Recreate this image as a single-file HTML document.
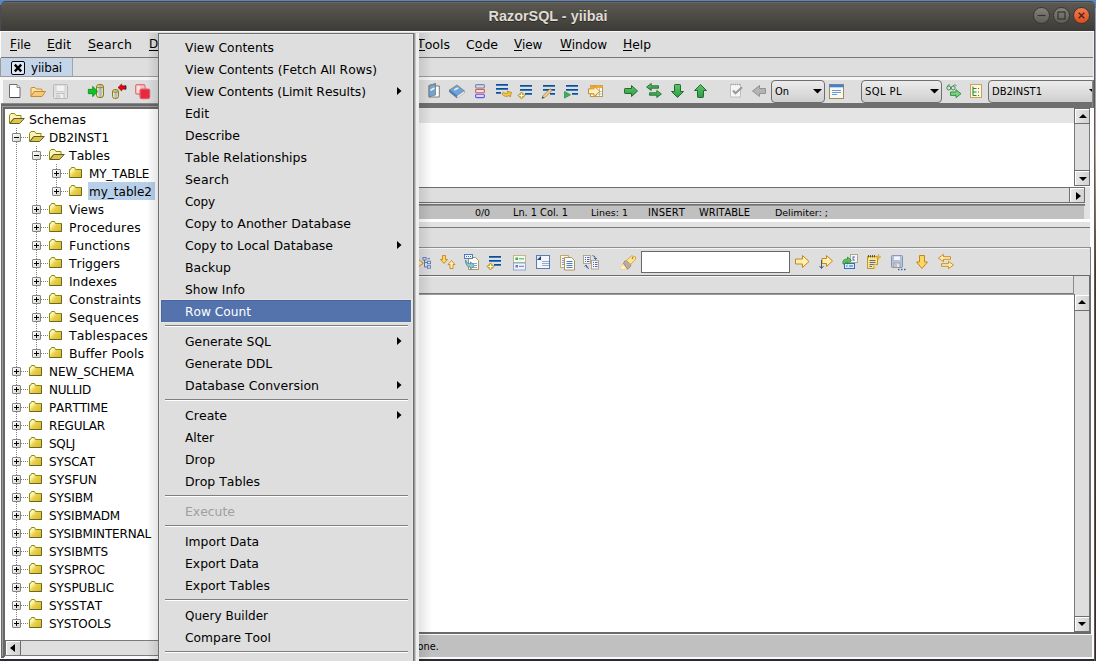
<!DOCTYPE html><html><head><meta charset="utf-8"><title>RazorSQL - yiibai</title><style>
*{box-sizing:border-box;margin:0;padding:0}
html,body{width:1096px;height:661px;overflow:hidden;background:#dedede}
body{position:relative;font-family:"DejaVu Sans","Liberation Sans",sans-serif;font-size:12px;color:#000}
.a{position:absolute}
.t{position:absolute;white-space:nowrap;font-kerning:none}
u{text-decoration:none;box-shadow:0 1px 0 #000;display:inline-block;height:12px;line-height:12px;vertical-align:top}
svg{position:absolute;overflow:visible}
.mi{position:absolute;left:185px;white-space:nowrap;line-height:14px;height:14px;letter-spacing:0.2px}
.sep{position:absolute;left:165px;width:243px;height:2px;border-top:1px solid #7f7f7f;border-bottom:1px solid #fff}
.tr{position:absolute;white-space:nowrap;line-height:14px;height:14px;letter-spacing:-0.15px}
.s10{font-size:10px;position:absolute;white-space:nowrap;line-height:12px;height:12px}
.cb{position:absolute;height:23px;top:80px;border:1px solid #6e6e6e;border-radius:4px;background:linear-gradient(#ececec,#cfcfcf)}
.sbtn{position:absolute;background:linear-gradient(to right,#e8e8e8,#d2d2d2);border:1px solid #6e6e6e;box-shadow:inset 1px 1px 0 #fff}
</style></head><body>
<div class="a" style="left:0px;top:0px;width:1096px;height:8px;background:#5a86c6;"></div>
<div class="a" style="left:0px;top:5px;width:1px;height:26px;background:#4a4a50;"></div>
<div class="a" style="left:1px;top:1px;width:1094px;height:30px;background:linear-gradient(#5c5a52,#3c3b37);border-radius:5px 5px 0 0;border-top:1px solid #45443d;box-shadow:inset 0 1px 0 #6a685c"></div>
<div class="t" style="left:0;width:1096px;top:8px;text-align:center;font:bold 14.4px 'Liberation Sans',sans-serif;color:#dfdbd2;line-height:16px;height:16px;text-shadow:0 1px 0 #2b2a27">RazorSQL - yiibai</div>
<div class="a" style="left:1032.5px;top:7px;width:17px;height:17px;background:linear-gradient(#84837b,#5d5c56);border-radius:9px;border:1px solid #383733"></div>
<div class="a" style="left:1052.5px;top:7px;width:17px;height:17px;background:linear-gradient(#84837b,#5d5c56);border-radius:9px;border:1px solid #383733"></div>
<div class="a" style="left:1072.5px;top:7px;width:17px;height:17px;background:linear-gradient(#f27c52,#d84e1e);border-radius:9px;border:1px solid #383733"></div>
<svg style="left:1032.5px;top:7px" width="60" height="17" viewBox="0 0 60 17"><path d="M4.500 8.500h8" stroke="#35342f" stroke-width="1.200" fill="none"/><rect x="25" y="5" width="7" height="7" fill="none" stroke="#35342f" stroke-width="1.200"/><path d="M45.700 5.700l5.600 5.600M51.300 5.700l-5.600 5.600" stroke="#4a2414" stroke-width="1.300" fill="none"/></svg>
<div class="a" style="left:0px;top:31px;width:1096px;height:1px;background:#f8f8f8;"></div>
<div class="a" style="left:0px;top:32px;width:1096px;height:25px;background:#dedede;"></div>
<div class="a" style="left:0px;top:57px;width:1096px;height:1px;background:#787878;"></div>
<div class="t" style="left:10px;top:38px;font-size:12px;letter-spacing:0.012px;line-height:14px;height:14px;color:#000;"><u>F</u>ile</div>
<div class="t" style="left:47px;top:38px;font-size:12.4px;letter-spacing:-0.003px;line-height:14px;height:14px;color:#000;"><u>E</u>dit</div>
<div class="t" style="left:88px;top:38px;font-size:12.5px;letter-spacing:0.130px;line-height:14px;height:14px;color:#000;"><u>S</u>earch</div>
<div class="t" style="left:149px;top:38px;font-size:12px;letter-spacing:-0.236px;line-height:14px;height:14px;color:#000;"><u>D</u>B</div>
<div class="t" style="left:417px;top:38px;font-size:12.5px;letter-spacing:0.017px;line-height:14px;height:14px;color:#000;"><u>T</u>ools</div>
<div class="t" style="left:466px;top:38px;font-size:12.5px;letter-spacing:-0.000px;line-height:14px;height:14px;color:#000;">C<u>o</u>de</div>
<div class="t" style="left:514px;top:38px;font-size:12px;letter-spacing:-0.185px;line-height:14px;height:14px;color:#000;"><u>V</u>iew</div>
<div class="t" style="left:560px;top:38px;font-size:12px;letter-spacing:-0.096px;line-height:14px;height:14px;color:#000;"><u>W</u>indow</div>
<div class="t" style="left:623px;top:38px;font-size:12.3px;letter-spacing:-0.010px;line-height:14px;height:14px;color:#000;"><u>H</u>elp</div>
<div class="a" style="left:0px;top:58px;width:1096px;height:18px;background:#dedede;"></div>
<div class="a" style="left:1px;top:58px;width:72px;height:18px;background:#c4d5ea;border-right:1px solid #9aa6b5"></div>
<div class="a" style="left:0px;top:76px;width:1096px;height:1px;background:#9c9c9c;"></div>
<div class="a" style="left:0px;top:31px;width:1px;height:27px;background:#fafafa;"></div>
<div class="a" style="left:0px;top:58px;width:1px;height:19px;background:#9c9c9c;"></div>
<div class="a" style="left:0px;top:77px;width:1096px;height:3px;background:#f6f6f6;"></div>
<div class="a" style="left:11px;top:61px;width:14px;height:14px;border:1px solid #000;border-radius:2px;background:#dfe8f4"></div>
<svg style="left:11px;top:61px" width="14" height="14" viewBox="0 0 14 14"><path d="M3.800 3.600l6.400 6.800M10.200 3.600l-6.400 6.800" stroke="#000" stroke-width="2.300" fill="none"/></svg>
<div class="t" style="left:31px;top:61px;font-size:12px;letter-spacing:-0.179px;line-height:14px;height:14px;color:#000;">yiibai</div>
<div class="a" style="left:0px;top:80px;width:1096px;height:23px;background:#dedede;"></div>
<div class="a" style="left:0px;top:80px;width:3px;height:23px;background:#fafafa;"></div>
<svg style="left:0px;top:0px" width="0" height="0" viewBox="0 0 0 0"><defs><linearGradient id="cy" x1="0" x2="1"><stop offset="0" stop-color="#f8f8f8"/><stop offset="0.550" stop-color="#b0b0b0"/><stop offset="1" stop-color="#e4e4e4"/></linearGradient></defs></svg>
<svg style="left:0px;top:0px" width="0" height="0" viewBox="0 0 0 0"><defs><linearGradient id="gg" x1="0" y1="0" x2="0" y2="1"><stop offset="0" stop-color="#62c46c"/><stop offset="1" stop-color="#2f9a42"/></linearGradient></defs></svg>
<svg style="left:9px;top:84px" width="16" height="16" viewBox="0 0 16 16"><path d="M0.5 0.5h7.5l3 3v10h-10.5z" fill="#fff" stroke="#6f6f6f"/><path d="M8 0.5v3h3" fill="#e8e8d8" stroke="#6f6f6f" stroke-width="0.8"/><path d="M1 13.5h10" stroke="#444"/></svg>
<svg style="left:30px;top:86px" width="16" height="16" viewBox="0 0 16 16"><path d="M1 10.5v-8q0-1 1-1h3l1.5 1.5h4.5q1 0 1 1v2" fill="#fbe2ac" stroke="#c98a2b"/><path d="M1 10.5l3-5h11.5l-3.5 5z" fill="#f6c978" stroke="#c98a2b" stroke-linejoin="round"/></svg>
<svg style="left:53px;top:84px" width="16" height="16" viewBox="0 0 16 16"><rect x="0.500" y="0.500" width="14" height="14" rx="1" fill="#e2e2e2" stroke="#b6b6b6"/><rect x="3" y="1" width="9" height="6.500" fill="#f2f2f2" stroke="#c4c4c4" stroke-width="0.700"/><rect x="4" y="9.500" width="7" height="5" fill="#f0f0f0" stroke="#b6b6b6" stroke-width="0.800"/><rect x="5.200" y="10.800" width="2" height="3" fill="#cacaca"/></svg>
<svg style="left:88px;top:84px" width="16" height="16" viewBox="0 0 16 16"><rect x="8.500" y="0.500" width="7" height="13" rx="2.500" fill="url(#cy)" stroke="#8c8400" stroke-width="1"/><path d="M8.500 3q3.500 1.800 7 0" fill="none" stroke="#8c8400" stroke-width="0.900"/><path d="M0.300 5.300h4.400v-3l5 5.200-5 5.200v-3h-4.400z" fill="#08c820" stroke="#0a6a14" stroke-width="0.600"/></svg>
<svg style="left:111px;top:84px" width="16" height="16" viewBox="0 0 16 16"><rect x="1.500" y="5.500" width="6" height="9" rx="2.200" fill="url(#cy)" stroke="#8c8400" stroke-width="1"/><path d="M1.500 7.600q3 1.500 6 0" fill="none" stroke="#8c8400" stroke-width="0.900"/><path d="M15 1.800h-4.300v-1.800l-3.700 3.500 3.700 3.500v-1.800h4.300z" fill="#f40000" stroke="#500" stroke-width="0.500"/><path d="M14.700 1.600v3.800" stroke="#102a90" stroke-width="0.900"/></svg>
<svg style="left:135px;top:84px" width="16" height="16" viewBox="0 0 16 16"><rect x="0.600" y="0.600" width="9.500" height="9.500" rx="1.500" fill="#f7bcbc" stroke="#df7474" stroke-width="1.100"/><rect x="1.800" y="1.800" width="3.500" height="7" fill="#fde8e8" opacity="0.800"/><rect x="5.100" y="5.100" width="9.500" height="9.500" rx="1.500" fill="#e52a40" stroke="#e25c6a" stroke-width="1.300"/></svg>
<svg style="left:428px;top:83px" width="16" height="16" viewBox="0 0 16 16"><path d="M1 2.5l6.5-1.8v11.3l-6.5 2z" fill="#68a4e6" stroke="#5a5a6a" stroke-width="0.8"/><path d="M7.5 3h3.8v11h-10z" fill="#fff" stroke="#5a5a6a" stroke-width="0.8"/><path d="M1 2.5l6.5-1.8v11.3l-6.5 2z" fill="#68a4e6" stroke="#8a7a50" stroke-width="0.8"/><path d="M3 7l2.8-1.6" stroke="#f0ead8" stroke-width="1.8" stroke-linecap="round"/></svg>
<svg style="left:449px;top:84px" width="16" height="16" viewBox="0 0 16 16"><path d="M0.5 6l7.5-5 7.5 6-7.5 5z" fill="#68a4e6" stroke="#8a7a50" stroke-width="0.8"/><path d="M0.5 6l7.5 6v2l-7.5-6z" fill="#3f7fd0" stroke="#5a6a8a" stroke-width="0.6"/><path d="M8 12l7.5-5v2l-7.5 5z" fill="#fff" stroke="#9a9a9a" stroke-width="0.6"/><path d="M6 5.5l2.6-1.2" stroke="#f0ead8" stroke-width="1.8" stroke-linecap="round"/></svg>
<svg style="left:475px;top:84px" width="16" height="16" viewBox="0 0 16 16"><rect x="0.600" y="0.600" width="8.800" height="3.400" rx="1" fill="#e6dcc0" stroke="#6a88cc" stroke-width="1.100"/><rect x="0.600" y="5.400" width="8.800" height="3.400" rx="1" fill="#fbe0d8" stroke="#d05c5c" stroke-width="1.100"/><rect x="0.600" y="10.200" width="8.800" height="3.400" rx="1" fill="#d8d8fb" stroke="#5c5ce0" stroke-width="1.100"/></svg>
<svg style="left:496px;top:84px" width="16" height="16" viewBox="0 0 16 16"><rect x="0" y="0" width="12" height="1" fill="#0c4f98"/><rect x="0" y="1" width="12" height="1" fill="#3a78bc"/><rect x="0" y="4" width="12" height="1" fill="#0c4f98"/><rect x="0" y="5" width="12" height="1" fill="#3a78bc"/><rect x="0" y="8" width="5" height="1" fill="#0c4f98"/><rect x="0" y="9" width="5" height="1" fill="#3a78bc"/><path d="M7.200 8.300q2.600 2.400 5 0.600l-1.100-1.700 4.400 1.300-1.300 4.500-1-1.600q-3.800 2.600-7.200-1.300z" fill="#f6c84a" stroke="#b8860b" stroke-width="0.800" stroke-linejoin="round"/></svg>
<svg style="left:518px;top:85px" width="16" height="16" viewBox="0 0 16 16"><g transform="translate(2,0)"><rect x="0" y="0" width="12" height="1" fill="#0c4f98"/><rect x="0" y="1" width="12" height="1" fill="#3a78bc"/><rect x="0" y="4" width="12" height="1" fill="#0c4f98"/><rect x="0" y="5" width="12" height="1" fill="#3a78bc"/><rect x="5" y="8" width="7" height="1" fill="#0c4f98"/><rect x="5" y="9" width="7" height="1" fill="#3a78bc"/></g><g transform="translate(0,7)"><path d="M0 3.500l3.500-3.500 3.500 3.500-3.500 3.500z" fill="#c8a024" stroke="#b08a14" stroke-width="0.600"/><path d="M3.500 1.200v4.600M1.200 3.500h4.600" stroke="#fffbe4" stroke-width="1.200"/></g></svg>
<svg style="left:541px;top:85px" width="16" height="16" viewBox="0 0 16 16"><g transform="translate(2,0)"><rect x="0" y="0" width="12" height="1" fill="#0c4f98"/><rect x="0" y="1" width="12" height="1" fill="#3a78bc"/><rect x="0" y="4" width="12" height="1" fill="#0c4f98"/><rect x="0" y="5" width="12" height="1" fill="#3a78bc"/><rect x="7" y="8" width="5" height="1" fill="#0c4f98"/><rect x="7" y="9" width="5" height="1" fill="#3a78bc"/></g><path d="M1 13.5l1-2.8 7-7 2 1.8-7 7z" fill="#f0cc90" stroke="#a07830" stroke-width="0.7"/><path d="M1 13.5l0.7-2 1.4 1.3z" fill="#203060"/></svg>
<svg style="left:564px;top:85px" width="16" height="16" viewBox="0 0 16 16"><g transform="translate(2,0)"><rect x="0" y="0" width="12" height="1" fill="#0c4f98"/><rect x="0" y="1" width="12" height="1" fill="#3a78bc"/><rect x="0" y="4" width="12" height="1" fill="#0c4f98"/><rect x="0" y="5" width="12" height="1" fill="#3a78bc"/><rect x="6" y="8" width="6" height="1" fill="#0c4f98"/><rect x="6" y="9" width="6" height="1" fill="#3a78bc"/></g><path d="M0.5 6.5l6 3.3-6 3.3z" fill="#3fae5a" stroke="#2a8a40" stroke-width="0.7"/></svg>
<svg style="left:588px;top:85px" width="16" height="16" viewBox="0 0 16 16"><rect x="2.5" y="0.5" width="12" height="11" fill="#fff" stroke="#b89a50"/><rect x="2.5" y="0.5" width="12" height="2.5" fill="#f6a83c"/><path d="M2.5 6.5h12M2.5 9h12M8.5 3v8.5M11.5 3v8.5" stroke="#b8b08a" stroke-width="0.8"/><path d="M0.500 3.800h5.500v-3l5.800 5.500-5.800 5.500v-3h-5.500z" fill="#fdf0c0" stroke="#d08a1a" stroke-width="1"/></svg>
<svg style="left:624px;top:85px" width="16" height="16" viewBox="0 0 16 16"><path d="M1.200 3.500h6.300v-3l6 5.500-6 5.500v-3h-6.300q-0.700 0-0.700-0.700v-3.600q0-0.700 0.700-0.700z" fill="url(#gg)" stroke="#1d6e2e" stroke-width="1"/></svg>
<svg style="left:646px;top:83px" width="16" height="16" viewBox="0 0 16 16"><path d="M0.600 4l4.600-3.500v2.300h7.300v2.400h-7.300v2.300z" fill="url(#gg)" stroke="#1d6e2e" stroke-width="0.900"/><path d="M15.400 11l-4.600-3.500v2.300h-7.300v2.400h7.300v2.300z" fill="url(#gg)" stroke="#1d6e2e" stroke-width="0.900"/></svg>
<svg style="left:671px;top:84px" width="16" height="16" viewBox="0 0 16 16"><path d="M4.200 0.500h4.600q0.700 0 0.700 0.700v6.300h3l-6 6-6-6h3v-6.300q0-0.700 0.700-0.700z" fill="url(#gg)" stroke="#1d6e2e" stroke-width="1"/></svg>
<svg style="left:694px;top:84px" width="16" height="16" viewBox="0 0 16 16"><path d="M4.200 13.500h4.600q0.700 0 0.700-0.700v-6.300h3l-6-6-6 6h3v6.300q0 0.700 0.700 0.700z" fill="url(#gg)" stroke="#1d6e2e" stroke-width="1"/></svg>
<svg style="left:730px;top:83px" width="16" height="16" viewBox="0 0 16 16"><rect x="0.5" y="1.5" width="10" height="12.500" fill="#f6f6f6" stroke="#c0c0c0"/><path d="M1 1.500h9.500" stroke="#a8a8a8" stroke-dasharray="1 1" stroke-width="1.4"/><path d="M3 7.500l2.500 2.800 6.500-6" stroke="#9a9a9a" stroke-width="2.200" fill="none"/></svg>
<svg style="left:752px;top:85px" width="16" height="16" viewBox="0 0 16 16"><path d="M13.500 3.500h-6v-3l-7 5.500 7 5.500v-3h6z" fill="#b4b4b4" stroke="#8c8c8c" stroke-width="0.9"/></svg>
<svg style="left:829px;top:84px" width="16" height="16" viewBox="0 0 16 16"><rect x="0.500" y="0.500" width="14" height="14" fill="#f8f8f0" stroke="#a08a50"/><rect x="0.500" y="0.500" width="14" height="2.500" fill="#3f7fd8"/><rect x="1" y="3" width="13" height="1" fill="#bcd4f4"/><path d="M3 6.500h9M3 8.500h9M3 10.500h5" stroke="#6a9ad8" stroke-width="1"/></svg>
<svg style="left:946px;top:84px" width="16" height="16" viewBox="0 0 16 16"><circle cx="2.800" cy="4" r="2" fill="none" stroke="#2a8a40" stroke-width="0.9"/><circle cx="7.200" cy="4" r="2" fill="none" stroke="#2a8a40" stroke-width="0.9"/><path d="M1.500 2.500q0.500-2.200 2.500-1.800M7 2q1.500-2 3.500-0.500" fill="none" stroke="#2a8a40" stroke-width="0.8"/><path d="M4.500 8h5.500v-2.300l5 4-5 4v-2.300h-5.500z" fill="#7ccf80" stroke="#2a8a40" stroke-width="0.9"/></svg>
<svg style="left:970px;top:84px" width="16" height="16" viewBox="0 0 16 16"><rect x="0.500" y="0.500" width="11" height="13" fill="#fdf6e0" stroke="#c8a25a"/><path d="M3 2.500v9M3 4.500h3.500M3 8h3.500M3 11.500h3.500" stroke="#2a8a40" stroke-width="1.100" fill="none"/><path d="M8 4.500h2M8 8h2M8 11.500h2" stroke="#2a8a40" stroke-width="1.100" stroke-dasharray="1 1"/></svg>
<div class="cb" style="left:771px;width:54px"></div>
<div class="t" style="left:775px;top:86px;font-size:9.9px;letter-spacing:-0.033px;line-height:12px;height:12px;color:#000;">On</div>
<svg style="left:813px;top:89px" width="9" height="5" viewBox="0 0 9 5"><path d="M0 0h9l-4.500 4.500z" fill="#000"/></svg>
<div class="cb" style="left:861px;width:81px"></div>
<div class="t" style="left:865px;top:86px;font-size:10px;letter-spacing:0.405px;line-height:12px;height:12px;color:#000;">SQL PL</div>
<svg style="left:930px;top:89px" width="9" height="5" viewBox="0 0 9 5"><path d="M0 0h9l-4.500 4.500z" fill="#000"/></svg>
<div class="cb" style="left:988px;width:120px"></div>
<div class="t" style="left:992px;top:86px;font-size:10px;letter-spacing:-0.021px;line-height:12px;height:12px;color:#000;">DB2INST1</div>
<svg style="left:1089px;top:89px" width="9" height="5" viewBox="0 0 9 5"><path d="M0 0h9l-4.500 4.500z" fill="#000"/></svg>
<div class="a" style="left:0px;top:103px;width:1096px;height:5px;background:#6f6f6f;"></div>
<div class="a" style="left:0px;top:77px;width:1px;height:584px;background:#fafafa;"></div>
<div class="a" style="left:1px;top:104px;width:1px;height:554px;background:#686868;"></div>
<div class="a" style="left:2px;top:104px;width:1px;height:553px;background:#9a9a9a;"></div>
<div class="a" style="left:3px;top:104px;width:2px;height:552px;background:#686868;"></div>
<div class="a" style="left:1px;top:103px;width:162px;height:1px;background:#8a8a8a;"></div>
<div class="a" style="left:1px;top:104px;width:162px;height:2px;background:#686868;"></div>
<div class="a" style="left:2px;top:106px;width:162px;height:1px;background:#9a9a9a;"></div>
<div class="a" style="left:3px;top:107px;width:162px;height:2px;background:#686868;"></div>
<div class="a" style="left:5px;top:109px;width:160px;height:531px;background:#fff;"></div>
<div class="a" style="left:16px;top:128px;width:1px;height:496px;background:repeating-linear-gradient(to bottom,#808080 0 1px,transparent 1px 2px)"></div>
<div class="a" style="left:36px;top:146px;width:1px;height:208px;background:repeating-linear-gradient(to bottom,#808080 0 1px,transparent 1px 2px)"></div>
<div class="a" style="left:56px;top:164px;width:1px;height:28px;background:repeating-linear-gradient(to bottom,#808080 0 1px,transparent 1px 2px)"></div>
<svg style="left:0px;top:0px" width="0" height="0" viewBox="0 0 0 0"><defs><linearGradient id="fg" x1="0" y1="0.100" x2="1" y2="0.900"><stop offset="0" stop-color="#ffffff"/><stop offset="0.280" stop-color="#fbef9c"/><stop offset="0.480" stop-color="#ead04a"/><stop offset="1" stop-color="#d9b92c"/></linearGradient></defs></svg>
<svg style="left:9px;top:113px" width="16" height="12" viewBox="0 0 16 12"><path d="M0.5 10.5v-8l1.5-2h3.5l1.500 2h5v3h-7.500l-4 5z" fill="#fdf3b8" stroke="#8c8c00" stroke-width="1"/><path d="M1 10.500l4-5h10.300l-4.800 5z" fill="#e2c440" stroke="#5c5c38" stroke-width="1" stroke-linejoin="round"/></svg>
<div class="t" style="left:29px;top:113px;font-size:12.5px;letter-spacing:0.033px;line-height:14px;height:14px;color:#000;">Schemas</div>
<div class="a" style="left:21px;top:137px;height:1px;width:7px;background:repeating-linear-gradient(to right,#808080 0 1px,transparent 1px 2px)"></div>
<div class="a" style="left:12px;top:133px;width:9px;height:9px;border:1px solid #848484;background:linear-gradient(135deg,#fff,#d8d4c8);border-radius:1px"></div>
<svg style="left:12px;top:133px" width="9" height="9" viewBox="0 0 9 9"><path d="M2 4.500h5" stroke="#000" stroke-width="1" fill="none"/></svg>
<svg style="left:29px;top:131px" width="16" height="12" viewBox="0 0 16 12"><path d="M0.5 10.5v-8l1.5-2h3.5l1.500 2h5v3h-7.500l-4 5z" fill="#fdf3b8" stroke="#8c8c00" stroke-width="1"/><path d="M1 10.500l4-5h10.300l-4.800 5z" fill="#e2c440" stroke="#5c5c38" stroke-width="1" stroke-linejoin="round"/></svg>
<div class="t" style="left:49px;top:131px;font-size:12px;letter-spacing:-0.026px;line-height:14px;height:14px;color:#000;">DB2INST1</div>
<div class="a" style="left:41px;top:155px;height:1px;width:7px;background:repeating-linear-gradient(to right,#808080 0 1px,transparent 1px 2px)"></div>
<div class="a" style="left:32px;top:151px;width:9px;height:9px;border:1px solid #848484;background:linear-gradient(135deg,#fff,#d8d4c8);border-radius:1px"></div>
<svg style="left:32px;top:151px" width="9" height="9" viewBox="0 0 9 9"><path d="M2 4.500h5" stroke="#000" stroke-width="1" fill="none"/></svg>
<svg style="left:49px;top:149px" width="16" height="12" viewBox="0 0 16 12"><path d="M0.5 10.5v-8l1.5-2h3.5l1.500 2h5v3h-7.500l-4 5z" fill="#fdf3b8" stroke="#8c8c00" stroke-width="1"/><path d="M1 10.500l4-5h10.300l-4.800 5z" fill="#e2c440" stroke="#5c5c38" stroke-width="1" stroke-linejoin="round"/></svg>
<div class="t" style="left:69px;top:149px;font-size:12.5px;letter-spacing:0.016px;line-height:14px;height:14px;color:#000;">Tables</div>
<div class="a" style="left:61px;top:173px;height:1px;width:7px;background:repeating-linear-gradient(to right,#808080 0 1px,transparent 1px 2px)"></div>
<div class="a" style="left:52px;top:169px;width:9px;height:9px;border:1px solid #848484;background:linear-gradient(135deg,#fff,#d8d4c8);border-radius:1px"></div>
<svg style="left:52px;top:169px" width="9" height="9" viewBox="0 0 9 9"><path d="M2 4.500h5M4.500 2v5" stroke="#000" stroke-width="1" fill="none"/></svg>
<svg style="left:69px;top:167px" width="14" height="12" viewBox="0 0 14 12"><path d="M0.500 10.500v-8h1l1-2h3l1 2h6v8z" fill="url(#fg)" stroke="#8c8c00" stroke-width="1" stroke-linejoin="round"/><path d="M12.500 2.500v8h-12" fill="none" stroke="#5c5c30" stroke-width="1" opacity="0.75"/></svg>
<div class="t" style="left:89px;top:167px;font-size:12px;letter-spacing:-0.215px;line-height:14px;height:14px;color:#000;">MY_TABLE</div>
<div class="a" style="left:88px;top:182px;width:67px;height:18px;background:#b8cfe9;"></div>
<div class="a" style="left:61px;top:191px;height:1px;width:7px;background:repeating-linear-gradient(to right,#808080 0 1px,transparent 1px 2px)"></div>
<div class="a" style="left:52px;top:187px;width:9px;height:9px;border:1px solid #848484;background:linear-gradient(135deg,#fff,#d8d4c8);border-radius:1px"></div>
<svg style="left:52px;top:187px" width="9" height="9" viewBox="0 0 9 9"><path d="M2 4.500h5M4.500 2v5" stroke="#000" stroke-width="1" fill="none"/></svg>
<svg style="left:69px;top:185px" width="14" height="12" viewBox="0 0 14 12"><path d="M0.500 10.500v-8h1l1-2h3l1 2h6v8z" fill="url(#fg)" stroke="#8c8c00" stroke-width="1" stroke-linejoin="round"/><path d="M12.500 2.500v8h-12" fill="none" stroke="#5c5c30" stroke-width="1" opacity="0.75"/></svg>
<div class="t" style="left:89px;top:185px;font-size:12px;letter-spacing:0.020px;line-height:14px;height:14px;color:#000;">my_table2</div>
<div class="a" style="left:41px;top:209px;height:1px;width:7px;background:repeating-linear-gradient(to right,#808080 0 1px,transparent 1px 2px)"></div>
<div class="a" style="left:32px;top:205px;width:9px;height:9px;border:1px solid #848484;background:linear-gradient(135deg,#fff,#d8d4c8);border-radius:1px"></div>
<svg style="left:32px;top:205px" width="9" height="9" viewBox="0 0 9 9"><path d="M2 4.500h5M4.500 2v5" stroke="#000" stroke-width="1" fill="none"/></svg>
<svg style="left:49px;top:203px" width="14" height="12" viewBox="0 0 14 12"><path d="M0.500 10.500v-8h1l1-2h3l1 2h6v8z" fill="url(#fg)" stroke="#8c8c00" stroke-width="1" stroke-linejoin="round"/><path d="M12.500 2.500v8h-12" fill="none" stroke="#5c5c30" stroke-width="1" opacity="0.75"/></svg>
<div class="t" style="left:69px;top:203px;font-size:12px;letter-spacing:0.002px;line-height:14px;height:14px;color:#000;">Views</div>
<div class="a" style="left:41px;top:227px;height:1px;width:7px;background:repeating-linear-gradient(to right,#808080 0 1px,transparent 1px 2px)"></div>
<div class="a" style="left:32px;top:223px;width:9px;height:9px;border:1px solid #848484;background:linear-gradient(135deg,#fff,#d8d4c8);border-radius:1px"></div>
<svg style="left:32px;top:223px" width="9" height="9" viewBox="0 0 9 9"><path d="M2 4.500h5M4.500 2v5" stroke="#000" stroke-width="1" fill="none"/></svg>
<svg style="left:49px;top:221px" width="14" height="12" viewBox="0 0 14 12"><path d="M0.500 10.500v-8h1l1-2h3l1 2h6v8z" fill="url(#fg)" stroke="#8c8c00" stroke-width="1" stroke-linejoin="round"/><path d="M12.500 2.500v8h-12" fill="none" stroke="#5c5c30" stroke-width="1" opacity="0.75"/></svg>
<div class="t" style="left:69px;top:221px;font-size:12.5px;letter-spacing:0.191px;line-height:14px;height:14px;color:#000;">Procedures</div>
<div class="a" style="left:41px;top:245px;height:1px;width:7px;background:repeating-linear-gradient(to right,#808080 0 1px,transparent 1px 2px)"></div>
<div class="a" style="left:32px;top:241px;width:9px;height:9px;border:1px solid #848484;background:linear-gradient(135deg,#fff,#d8d4c8);border-radius:1px"></div>
<svg style="left:32px;top:241px" width="9" height="9" viewBox="0 0 9 9"><path d="M2 4.500h5M4.500 2v5" stroke="#000" stroke-width="1" fill="none"/></svg>
<svg style="left:49px;top:239px" width="14" height="12" viewBox="0 0 14 12"><path d="M0.500 10.500v-8h1l1-2h3l1 2h6v8z" fill="url(#fg)" stroke="#8c8c00" stroke-width="1" stroke-linejoin="round"/><path d="M12.500 2.500v8h-12" fill="none" stroke="#5c5c30" stroke-width="1" opacity="0.75"/></svg>
<div class="t" style="left:69px;top:239px;font-size:12.5px;letter-spacing:0.071px;line-height:14px;height:14px;color:#000;">Functions</div>
<div class="a" style="left:41px;top:263px;height:1px;width:7px;background:repeating-linear-gradient(to right,#808080 0 1px,transparent 1px 2px)"></div>
<div class="a" style="left:32px;top:259px;width:9px;height:9px;border:1px solid #848484;background:linear-gradient(135deg,#fff,#d8d4c8);border-radius:1px"></div>
<svg style="left:32px;top:259px" width="9" height="9" viewBox="0 0 9 9"><path d="M2 4.500h5M4.500 2v5" stroke="#000" stroke-width="1" fill="none"/></svg>
<svg style="left:49px;top:257px" width="14" height="12" viewBox="0 0 14 12"><path d="M0.500 10.500v-8h1l1-2h3l1 2h6v8z" fill="url(#fg)" stroke="#8c8c00" stroke-width="1" stroke-linejoin="round"/><path d="M12.500 2.500v8h-12" fill="none" stroke="#5c5c30" stroke-width="1" opacity="0.75"/></svg>
<div class="t" style="left:69px;top:257px;font-size:12.4px;letter-spacing:-0.006px;line-height:14px;height:14px;color:#000;">Triggers</div>
<div class="a" style="left:41px;top:281px;height:1px;width:7px;background:repeating-linear-gradient(to right,#808080 0 1px,transparent 1px 2px)"></div>
<div class="a" style="left:32px;top:277px;width:9px;height:9px;border:1px solid #848484;background:linear-gradient(135deg,#fff,#d8d4c8);border-radius:1px"></div>
<svg style="left:32px;top:277px" width="9" height="9" viewBox="0 0 9 9"><path d="M2 4.500h5M4.500 2v5" stroke="#000" stroke-width="1" fill="none"/></svg>
<svg style="left:49px;top:275px" width="14" height="12" viewBox="0 0 14 12"><path d="M0.500 10.500v-8h1l1-2h3l1 2h6v8z" fill="url(#fg)" stroke="#8c8c00" stroke-width="1" stroke-linejoin="round"/><path d="M12.500 2.500v8h-12" fill="none" stroke="#5c5c30" stroke-width="1" opacity="0.75"/></svg>
<div class="t" style="left:69px;top:275px;font-size:12.3px;letter-spacing:-0.008px;line-height:14px;height:14px;color:#000;">Indexes</div>
<div class="a" style="left:41px;top:299px;height:1px;width:7px;background:repeating-linear-gradient(to right,#808080 0 1px,transparent 1px 2px)"></div>
<div class="a" style="left:32px;top:295px;width:9px;height:9px;border:1px solid #848484;background:linear-gradient(135deg,#fff,#d8d4c8);border-radius:1px"></div>
<svg style="left:32px;top:295px" width="9" height="9" viewBox="0 0 9 9"><path d="M2 4.500h5M4.500 2v5" stroke="#000" stroke-width="1" fill="none"/></svg>
<svg style="left:49px;top:293px" width="14" height="12" viewBox="0 0 14 12"><path d="M0.500 10.500v-8h1l1-2h3l1 2h6v8z" fill="url(#fg)" stroke="#8c8c00" stroke-width="1" stroke-linejoin="round"/><path d="M12.500 2.500v8h-12" fill="none" stroke="#5c5c30" stroke-width="1" opacity="0.75"/></svg>
<div class="t" style="left:69px;top:293px;font-size:12.5px;letter-spacing:0.062px;line-height:14px;height:14px;color:#000;">Constraints</div>
<div class="a" style="left:41px;top:317px;height:1px;width:7px;background:repeating-linear-gradient(to right,#808080 0 1px,transparent 1px 2px)"></div>
<div class="a" style="left:32px;top:313px;width:9px;height:9px;border:1px solid #848484;background:linear-gradient(135deg,#fff,#d8d4c8);border-radius:1px"></div>
<svg style="left:32px;top:313px" width="9" height="9" viewBox="0 0 9 9"><path d="M2 4.500h5M4.500 2v5" stroke="#000" stroke-width="1" fill="none"/></svg>
<svg style="left:49px;top:311px" width="14" height="12" viewBox="0 0 14 12"><path d="M0.500 10.500v-8h1l1-2h3l1 2h6v8z" fill="url(#fg)" stroke="#8c8c00" stroke-width="1" stroke-linejoin="round"/><path d="M12.500 2.500v8h-12" fill="none" stroke="#5c5c30" stroke-width="1" opacity="0.75"/></svg>
<div class="t" style="left:69px;top:311px;font-size:12.5px;letter-spacing:0.203px;line-height:14px;height:14px;color:#000;">Sequences</div>
<div class="a" style="left:41px;top:335px;height:1px;width:7px;background:repeating-linear-gradient(to right,#808080 0 1px,transparent 1px 2px)"></div>
<div class="a" style="left:32px;top:331px;width:9px;height:9px;border:1px solid #848484;background:linear-gradient(135deg,#fff,#d8d4c8);border-radius:1px"></div>
<svg style="left:32px;top:331px" width="9" height="9" viewBox="0 0 9 9"><path d="M2 4.500h5M4.500 2v5" stroke="#000" stroke-width="1" fill="none"/></svg>
<svg style="left:49px;top:329px" width="14" height="12" viewBox="0 0 14 12"><path d="M0.500 10.500v-8h1l1-2h3l1 2h6v8z" fill="url(#fg)" stroke="#8c8c00" stroke-width="1" stroke-linejoin="round"/><path d="M12.500 2.500v8h-12" fill="none" stroke="#5c5c30" stroke-width="1" opacity="0.75"/></svg>
<div class="t" style="left:69px;top:329px;font-size:12.5px;letter-spacing:0.129px;line-height:14px;height:14px;color:#000;">Tablespaces</div>
<div class="a" style="left:41px;top:353px;height:1px;width:7px;background:repeating-linear-gradient(to right,#808080 0 1px,transparent 1px 2px)"></div>
<div class="a" style="left:32px;top:349px;width:9px;height:9px;border:1px solid #848484;background:linear-gradient(135deg,#fff,#d8d4c8);border-radius:1px"></div>
<svg style="left:32px;top:349px" width="9" height="9" viewBox="0 0 9 9"><path d="M2 4.500h5M4.500 2v5" stroke="#000" stroke-width="1" fill="none"/></svg>
<svg style="left:49px;top:347px" width="14" height="12" viewBox="0 0 14 12"><path d="M0.500 10.500v-8h1l1-2h3l1 2h6v8z" fill="url(#fg)" stroke="#8c8c00" stroke-width="1" stroke-linejoin="round"/><path d="M12.500 2.500v8h-12" fill="none" stroke="#5c5c30" stroke-width="1" opacity="0.75"/></svg>
<div class="t" style="left:69px;top:347px;font-size:12.5px;letter-spacing:0.007px;line-height:14px;height:14px;color:#000;">Buffer Pools</div>
<div class="a" style="left:21px;top:371px;height:1px;width:7px;background:repeating-linear-gradient(to right,#808080 0 1px,transparent 1px 2px)"></div>
<div class="a" style="left:12px;top:367px;width:9px;height:9px;border:1px solid #848484;background:linear-gradient(135deg,#fff,#d8d4c8);border-radius:1px"></div>
<svg style="left:12px;top:367px" width="9" height="9" viewBox="0 0 9 9"><path d="M2 4.500h5M4.500 2v5" stroke="#000" stroke-width="1" fill="none"/></svg>
<svg style="left:29px;top:365px" width="14" height="12" viewBox="0 0 14 12"><path d="M0.500 10.500v-8h1l1-2h3l1 2h6v8z" fill="url(#fg)" stroke="#8c8c00" stroke-width="1" stroke-linejoin="round"/><path d="M12.500 2.500v8h-12" fill="none" stroke="#5c5c30" stroke-width="1" opacity="0.75"/></svg>
<div class="t" style="left:49px;top:365px;font-size:12px;letter-spacing:-0.059px;line-height:14px;height:14px;color:#000;">NEW_SCHEMA</div>
<div class="a" style="left:21px;top:389px;height:1px;width:7px;background:repeating-linear-gradient(to right,#808080 0 1px,transparent 1px 2px)"></div>
<div class="a" style="left:12px;top:385px;width:9px;height:9px;border:1px solid #848484;background:linear-gradient(135deg,#fff,#d8d4c8);border-radius:1px"></div>
<svg style="left:12px;top:385px" width="9" height="9" viewBox="0 0 9 9"><path d="M2 4.500h5M4.500 2v5" stroke="#000" stroke-width="1" fill="none"/></svg>
<svg style="left:29px;top:383px" width="14" height="12" viewBox="0 0 14 12"><path d="M0.500 10.500v-8h1l1-2h3l1 2h6v8z" fill="url(#fg)" stroke="#8c8c00" stroke-width="1" stroke-linejoin="round"/><path d="M12.500 2.500v8h-12" fill="none" stroke="#5c5c30" stroke-width="1" opacity="0.75"/></svg>
<div class="t" style="left:49px;top:383px;font-size:12px;letter-spacing:-0.318px;line-height:14px;height:14px;color:#000;">NULLID</div>
<div class="a" style="left:21px;top:407px;height:1px;width:7px;background:repeating-linear-gradient(to right,#808080 0 1px,transparent 1px 2px)"></div>
<div class="a" style="left:12px;top:403px;width:9px;height:9px;border:1px solid #848484;background:linear-gradient(135deg,#fff,#d8d4c8);border-radius:1px"></div>
<svg style="left:12px;top:403px" width="9" height="9" viewBox="0 0 9 9"><path d="M2 4.500h5M4.500 2v5" stroke="#000" stroke-width="1" fill="none"/></svg>
<svg style="left:29px;top:401px" width="14" height="12" viewBox="0 0 14 12"><path d="M0.500 10.500v-8h1l1-2h3l1 2h6v8z" fill="url(#fg)" stroke="#8c8c00" stroke-width="1" stroke-linejoin="round"/><path d="M12.500 2.500v8h-12" fill="none" stroke="#5c5c30" stroke-width="1" opacity="0.75"/></svg>
<div class="t" style="left:49px;top:401px;font-size:12px;letter-spacing:-0.115px;line-height:14px;height:14px;color:#000;">PARTTIME</div>
<div class="a" style="left:21px;top:425px;height:1px;width:7px;background:repeating-linear-gradient(to right,#808080 0 1px,transparent 1px 2px)"></div>
<div class="a" style="left:12px;top:421px;width:9px;height:9px;border:1px solid #848484;background:linear-gradient(135deg,#fff,#d8d4c8);border-radius:1px"></div>
<svg style="left:12px;top:421px" width="9" height="9" viewBox="0 0 9 9"><path d="M2 4.500h5M4.500 2v5" stroke="#000" stroke-width="1" fill="none"/></svg>
<svg style="left:29px;top:419px" width="14" height="12" viewBox="0 0 14 12"><path d="M0.500 10.500v-8h1l1-2h3l1 2h6v8z" fill="url(#fg)" stroke="#8c8c00" stroke-width="1" stroke-linejoin="round"/><path d="M12.500 2.500v8h-12" fill="none" stroke="#5c5c30" stroke-width="1" opacity="0.75"/></svg>
<div class="t" style="left:49px;top:419px;font-size:12px;letter-spacing:-0.176px;line-height:14px;height:14px;color:#000;">REGULAR</div>
<div class="a" style="left:21px;top:443px;height:1px;width:7px;background:repeating-linear-gradient(to right,#808080 0 1px,transparent 1px 2px)"></div>
<div class="a" style="left:12px;top:439px;width:9px;height:9px;border:1px solid #848484;background:linear-gradient(135deg,#fff,#d8d4c8);border-radius:1px"></div>
<svg style="left:12px;top:439px" width="9" height="9" viewBox="0 0 9 9"><path d="M2 4.500h5M4.500 2v5" stroke="#000" stroke-width="1" fill="none"/></svg>
<svg style="left:29px;top:437px" width="14" height="12" viewBox="0 0 14 12"><path d="M0.500 10.500v-8h1l1-2h3l1 2h6v8z" fill="url(#fg)" stroke="#8c8c00" stroke-width="1" stroke-linejoin="round"/><path d="M12.500 2.500v8h-12" fill="none" stroke="#5c5c30" stroke-width="1" opacity="0.75"/></svg>
<div class="t" style="left:49px;top:437px;font-size:12px;letter-spacing:-0.322px;line-height:14px;height:14px;color:#000;">SQLJ</div>
<div class="a" style="left:21px;top:461px;height:1px;width:7px;background:repeating-linear-gradient(to right,#808080 0 1px,transparent 1px 2px)"></div>
<div class="a" style="left:12px;top:457px;width:9px;height:9px;border:1px solid #848484;background:linear-gradient(135deg,#fff,#d8d4c8);border-radius:1px"></div>
<svg style="left:12px;top:457px" width="9" height="9" viewBox="0 0 9 9"><path d="M2 4.500h5M4.500 2v5" stroke="#000" stroke-width="1" fill="none"/></svg>
<svg style="left:29px;top:455px" width="14" height="12" viewBox="0 0 14 12"><path d="M0.500 10.500v-8h1l1-2h3l1 2h6v8z" fill="url(#fg)" stroke="#8c8c00" stroke-width="1" stroke-linejoin="round"/><path d="M12.500 2.500v8h-12" fill="none" stroke="#5c5c30" stroke-width="1" opacity="0.75"/></svg>
<div class="t" style="left:49px;top:455px;font-size:12px;letter-spacing:-0.080px;line-height:14px;height:14px;color:#000;">SYSCAT</div>
<div class="a" style="left:21px;top:479px;height:1px;width:7px;background:repeating-linear-gradient(to right,#808080 0 1px,transparent 1px 2px)"></div>
<div class="a" style="left:12px;top:475px;width:9px;height:9px;border:1px solid #848484;background:linear-gradient(135deg,#fff,#d8d4c8);border-radius:1px"></div>
<svg style="left:12px;top:475px" width="9" height="9" viewBox="0 0 9 9"><path d="M2 4.500h5M4.500 2v5" stroke="#000" stroke-width="1" fill="none"/></svg>
<svg style="left:29px;top:473px" width="14" height="12" viewBox="0 0 14 12"><path d="M0.500 10.500v-8h1l1-2h3l1 2h6v8z" fill="url(#fg)" stroke="#8c8c00" stroke-width="1" stroke-linejoin="round"/><path d="M12.500 2.500v8h-12" fill="none" stroke="#5c5c30" stroke-width="1" opacity="0.75"/></svg>
<div class="t" style="left:49px;top:473px;font-size:12.2px;letter-spacing:-0.002px;line-height:14px;height:14px;color:#000;">SYSFUN</div>
<div class="a" style="left:21px;top:497px;height:1px;width:7px;background:repeating-linear-gradient(to right,#808080 0 1px,transparent 1px 2px)"></div>
<div class="a" style="left:12px;top:493px;width:9px;height:9px;border:1px solid #848484;background:linear-gradient(135deg,#fff,#d8d4c8);border-radius:1px"></div>
<svg style="left:12px;top:493px" width="9" height="9" viewBox="0 0 9 9"><path d="M2 4.500h5M4.500 2v5" stroke="#000" stroke-width="1" fill="none"/></svg>
<svg style="left:29px;top:491px" width="14" height="12" viewBox="0 0 14 12"><path d="M0.500 10.500v-8h1l1-2h3l1 2h6v8z" fill="url(#fg)" stroke="#8c8c00" stroke-width="1" stroke-linejoin="round"/><path d="M12.500 2.500v8h-12" fill="none" stroke="#5c5c30" stroke-width="1" opacity="0.75"/></svg>
<div class="t" style="left:49px;top:491px;font-size:12px;letter-spacing:-0.115px;line-height:14px;height:14px;color:#000;">SYSIBM</div>
<div class="a" style="left:21px;top:515px;height:1px;width:7px;background:repeating-linear-gradient(to right,#808080 0 1px,transparent 1px 2px)"></div>
<div class="a" style="left:12px;top:511px;width:9px;height:9px;border:1px solid #848484;background:linear-gradient(135deg,#fff,#d8d4c8);border-radius:1px"></div>
<svg style="left:12px;top:511px" width="9" height="9" viewBox="0 0 9 9"><path d="M2 4.500h5M4.500 2v5" stroke="#000" stroke-width="1" fill="none"/></svg>
<svg style="left:29px;top:509px" width="14" height="12" viewBox="0 0 14 12"><path d="M0.500 10.500v-8h1l1-2h3l1 2h6v8z" fill="url(#fg)" stroke="#8c8c00" stroke-width="1" stroke-linejoin="round"/><path d="M12.500 2.500v8h-12" fill="none" stroke="#5c5c30" stroke-width="1" opacity="0.75"/></svg>
<div class="t" style="left:49px;top:509px;font-size:12px;letter-spacing:-0.166px;line-height:14px;height:14px;color:#000;">SYSIBMADM</div>
<div class="a" style="left:21px;top:533px;height:1px;width:7px;background:repeating-linear-gradient(to right,#808080 0 1px,transparent 1px 2px)"></div>
<div class="a" style="left:12px;top:529px;width:9px;height:9px;border:1px solid #848484;background:linear-gradient(135deg,#fff,#d8d4c8);border-radius:1px"></div>
<svg style="left:12px;top:529px" width="9" height="9" viewBox="0 0 9 9"><path d="M2 4.500h5M4.500 2v5" stroke="#000" stroke-width="1" fill="none"/></svg>
<svg style="left:29px;top:527px" width="14" height="12" viewBox="0 0 14 12"><path d="M0.500 10.500v-8h1l1-2h3l1 2h6v8z" fill="url(#fg)" stroke="#8c8c00" stroke-width="1" stroke-linejoin="round"/><path d="M12.500 2.500v8h-12" fill="none" stroke="#5c5c30" stroke-width="1" opacity="0.75"/></svg>
<div class="t" style="left:49px;top:527px;font-size:12px;letter-spacing:-0.166px;line-height:14px;height:14px;color:#000;">SYSIBMINTERNAL</div>
<div class="a" style="left:21px;top:551px;height:1px;width:7px;background:repeating-linear-gradient(to right,#808080 0 1px,transparent 1px 2px)"></div>
<div class="a" style="left:12px;top:547px;width:9px;height:9px;border:1px solid #848484;background:linear-gradient(135deg,#fff,#d8d4c8);border-radius:1px"></div>
<svg style="left:12px;top:547px" width="9" height="9" viewBox="0 0 9 9"><path d="M2 4.500h5M4.500 2v5" stroke="#000" stroke-width="1" fill="none"/></svg>
<svg style="left:29px;top:545px" width="14" height="12" viewBox="0 0 14 12"><path d="M0.500 10.500v-8h1l1-2h3l1 2h6v8z" fill="url(#fg)" stroke="#8c8c00" stroke-width="1" stroke-linejoin="round"/><path d="M12.500 2.500v8h-12" fill="none" stroke="#5c5c30" stroke-width="1" opacity="0.75"/></svg>
<div class="t" style="left:49px;top:545px;font-size:12px;letter-spacing:-0.080px;line-height:14px;height:14px;color:#000;">SYSIBMTS</div>
<div class="a" style="left:21px;top:569px;height:1px;width:7px;background:repeating-linear-gradient(to right,#808080 0 1px,transparent 1px 2px)"></div>
<div class="a" style="left:12px;top:565px;width:9px;height:9px;border:1px solid #848484;background:linear-gradient(135deg,#fff,#d8d4c8);border-radius:1px"></div>
<svg style="left:12px;top:565px" width="9" height="9" viewBox="0 0 9 9"><path d="M2 4.500h5M4.500 2v5" stroke="#000" stroke-width="1" fill="none"/></svg>
<svg style="left:29px;top:563px" width="14" height="12" viewBox="0 0 14 12"><path d="M0.500 10.500v-8h1l1-2h3l1 2h6v8z" fill="url(#fg)" stroke="#8c8c00" stroke-width="1" stroke-linejoin="round"/><path d="M12.500 2.500v8h-12" fill="none" stroke="#5c5c30" stroke-width="1" opacity="0.75"/></svg>
<div class="t" style="left:49px;top:563px;font-size:12px;letter-spacing:0.005px;line-height:14px;height:14px;color:#000;">SYSPROC</div>
<div class="a" style="left:21px;top:587px;height:1px;width:7px;background:repeating-linear-gradient(to right,#808080 0 1px,transparent 1px 2px)"></div>
<div class="a" style="left:12px;top:583px;width:9px;height:9px;border:1px solid #848484;background:linear-gradient(135deg,#fff,#d8d4c8);border-radius:1px"></div>
<svg style="left:12px;top:583px" width="9" height="9" viewBox="0 0 9 9"><path d="M2 4.500h5M4.500 2v5" stroke="#000" stroke-width="1" fill="none"/></svg>
<svg style="left:29px;top:581px" width="14" height="12" viewBox="0 0 14 12"><path d="M0.500 10.500v-8h1l1-2h3l1 2h6v8z" fill="url(#fg)" stroke="#8c8c00" stroke-width="1" stroke-linejoin="round"/><path d="M12.500 2.500v8h-12" fill="none" stroke="#5c5c30" stroke-width="1" opacity="0.75"/></svg>
<div class="t" style="left:49px;top:581px;font-size:12px;letter-spacing:-0.047px;line-height:14px;height:14px;color:#000;">SYSPUBLIC</div>
<div class="a" style="left:21px;top:605px;height:1px;width:7px;background:repeating-linear-gradient(to right,#808080 0 1px,transparent 1px 2px)"></div>
<div class="a" style="left:12px;top:601px;width:9px;height:9px;border:1px solid #848484;background:linear-gradient(135deg,#fff,#d8d4c8);border-radius:1px"></div>
<svg style="left:12px;top:601px" width="9" height="9" viewBox="0 0 9 9"><path d="M2 4.500h5M4.500 2v5" stroke="#000" stroke-width="1" fill="none"/></svg>
<svg style="left:29px;top:599px" width="14" height="12" viewBox="0 0 14 12"><path d="M0.500 10.500v-8h1l1-2h3l1 2h6v8z" fill="url(#fg)" stroke="#8c8c00" stroke-width="1" stroke-linejoin="round"/><path d="M12.500 2.500v8h-12" fill="none" stroke="#5c5c30" stroke-width="1" opacity="0.75"/></svg>
<div class="t" style="left:49px;top:599px;font-size:12px;letter-spacing:-0.007px;line-height:14px;height:14px;color:#000;">SYSSTAT</div>
<div class="a" style="left:21px;top:623px;height:1px;width:7px;background:repeating-linear-gradient(to right,#808080 0 1px,transparent 1px 2px)"></div>
<div class="a" style="left:12px;top:619px;width:9px;height:9px;border:1px solid #848484;background:linear-gradient(135deg,#fff,#d8d4c8);border-radius:1px"></div>
<svg style="left:12px;top:619px" width="9" height="9" viewBox="0 0 9 9"><path d="M2 4.500h5M4.500 2v5" stroke="#000" stroke-width="1" fill="none"/></svg>
<svg style="left:29px;top:617px" width="14" height="12" viewBox="0 0 14 12"><path d="M0.500 10.500v-8h1l1-2h3l1 2h6v8z" fill="url(#fg)" stroke="#8c8c00" stroke-width="1" stroke-linejoin="round"/><path d="M12.500 2.500v8h-12" fill="none" stroke="#5c5c30" stroke-width="1" opacity="0.75"/></svg>
<div class="t" style="left:49px;top:617px;font-size:12px;letter-spacing:-0.136px;line-height:14px;height:14px;color:#000;">SYSTOOLS</div>
<div class="a" style="left:5px;top:640px;width:160px;height:1px;background:#7a7a7a;"></div>
<div class="a" style="left:5px;top:641px;width:160px;height:14px;background:#dedede;"></div>
<div class="sbtn" style="left:5px;top:640px;width:16px;height:16px"></div>
<svg style="left:10px;top:644px" width="5" height="8" viewBox="0 0 5 8"><path d="M5 0v8l-5-4z" fill="#000"/></svg>
<div class="a" style="left:5px;top:655px;width:160px;height:1px;background:#7a7a7a;"></div>
<div class="a" style="left:0px;top:656px;width:1096px;height:3px;background:#fafafa;"></div>
<div class="a" style="left:1px;top:656px;width:4px;height:1px;background:#686868;"></div>
<div class="a" style="left:1px;top:657px;width:3px;height:1px;background:#686868;"></div>
<div class="a" style="left:0px;top:659px;width:1096px;height:2px;background:#2a2c34;"></div>
<div class="a" style="left:163px;top:108px;width:927px;height:79px;background:#fff;"></div>
<div class="a" style="left:163px;top:108px;width:911px;height:15px;background:#e4e4e4;"></div>
<div class="a" style="left:1074px;top:108px;width:16px;height:78px;background:#dedede;border-left:1px solid #7a7a7a;border-right:1px solid #7a7a7a"></div>
<div class="sbtn" style="left:1074px;top:108px;width:16px;height:16px"></div>
<svg style="left:1079px;top:114px" width="8" height="4" viewBox="0 0 8 4"><path d="M0 4h8l-4-4z" fill="#000"/></svg>
<div class="sbtn" style="left:1074px;top:170px;width:16px;height:16px"></div>
<svg style="left:1079px;top:177px" width="8" height="4" viewBox="0 0 8 4"><path d="M0 0h8l-4 4z" fill="#000"/></svg>
<div class="a" style="left:163px;top:186px;width:927px;height:1px;background:#fff;"></div>
<div class="a" style="left:163px;top:187px;width:921px;height:16px;background:#dedede;border-top:1px solid #6e6e6e;border-bottom:1px solid #6e6e6e"></div>
<div class="sbtn" style="left:1069px;top:187px;width:16px;height:16px"></div>
<svg style="left:1076px;top:192px" width="5" height="8" viewBox="0 0 5 8"><path d="M0 0v8l5-4z" fill="#000"/></svg>
<div class="a" style="left:1085px;top:187px;width:5px;height:33px;background:#e2e2e2;"></div>
<div class="a" style="left:163px;top:203px;width:922px;height:1px;background:#e4e4e4;"></div>
<div class="a" style="left:163px;top:204px;width:922px;height:1px;background:#6e6e6e;"></div>
<div class="a" style="left:163px;top:205px;width:922px;height:1px;background:#8e8e8e;"></div>
<div class="a" style="left:163px;top:206px;width:921px;height:13px;background:#c0c0c0;"></div>
<div class="t" style="left:475px;top:207px;font-size:9.5px;letter-spacing:-0.096px;line-height:12px;height:12px;color:#000;">0/0</div>
<div class="t" style="left:513px;top:207px;font-size:9.8px;letter-spacing:-0.023px;line-height:12px;height:12px;color:#000;">Ln. 1 Col. 1</div>
<div class="t" style="left:591px;top:207px;font-size:9.5px;letter-spacing:-0.001px;line-height:12px;height:12px;color:#000;">Lines: 1</div>
<div class="t" style="left:648px;top:207px;font-size:10px;letter-spacing:0.141px;line-height:12px;height:12px;color:#000;">INSERT</div>
<div class="t" style="left:699px;top:207px;font-size:9.9px;letter-spacing:0.004px;line-height:12px;height:12px;color:#000;">WRITABLE</div>
<div class="t" style="left:775px;top:207px;font-size:9.5px;letter-spacing:-0.019px;line-height:12px;height:12px;color:#000;">Delimiter: ;</div>
<div class="a" style="left:163px;top:219px;width:927px;height:3px;background:#fff;"></div>
<div class="a" style="left:163px;top:222px;width:927px;height:5px;background:#e2e2e2;"></div>
<div class="a" style="left:163px;top:227px;width:927px;height:1px;background:#7a7a7a;"></div>
<div class="a" style="left:163px;top:228px;width:927px;height:19px;background:#dedede;"></div>
<div class="a" style="left:163px;top:247px;width:928px;height:29px;background:#dedede;border-top:1px solid #8e8e8e;border-bottom:1px solid #6a6a6a;border-right:1px solid #7a7a7a"></div>
<div class="a" style="left:163px;top:248px;width:926px;height:1px;background:#f4f4f4;"></div>
<svg style="left:420px;top:257px" width="16" height="16" viewBox="0 0 16 16"><path d="M-1.500 2.500l4.800 3.600-4.800 3.600z" fill="#fbe9a8" stroke="#c8861a" stroke-width="0.900"/><path d="M4.500 1.500v8.500h3M4.500 5.500h3" stroke="#5a7ab8" stroke-width="1" fill="none"/><rect x="3" y="0.500" width="3" height="2.500" fill="#dfe8f8" stroke="#5a7ab8" stroke-width="0.9"/><rect x="7.500" y="4.200" width="3" height="2.500" fill="#dfe8f8" stroke="#5a7ab8" stroke-width="0.9"/><rect x="7.500" y="8.700" width="3" height="2.500" fill="#dfe8f8" stroke="#5a7ab8" stroke-width="0.9"/><path d="M7.500 1.700h2.500" stroke="#5a7ab8"/></svg>
<svg style="left:440px;top:255px" width="16" height="16" viewBox="0 0 16 16"><path d="M2.500 0.500h3v4h2l-3.500 4-3.500-4h2z" fill="#fbd862" stroke="#c8861a" stroke-width="0.9"/><path d="M10 13.500h3v-4h2l-3.500-4-3.500 4h2z" fill="#fdf0b0" stroke="#c8861a" stroke-width="0.9"/></svg>
<svg style="left:464px;top:254px" width="16" height="16" viewBox="0 0 16 16"><path d="M4.500 3.500h7l3 3v9h-10z" fill="#fdfdf6" stroke="#a08a50" stroke-width="0.9"/><path d="M7 9.500h6M7 11.500h6M7 13.500h6" stroke="#7a9ad0" stroke-width="0.9"/><rect x="0.500" y="0.500" width="8" height="4" fill="#eef4fd" stroke="#3f6fc0" stroke-width="0.9"/><path d="M2 2.500h1M4 2.500h1M6 2.500h1" stroke="#3f6fc0"/><path d="M1.500 6q1 4 5 4v-2l4 3.500-4 3.500v-2q-5 0-5-7z" fill="#8fcfc0" stroke="#3f7fb0" stroke-width="0.8"/></svg>
<svg style="left:487px;top:256px" width="16" height="16" viewBox="0 0 16 16"><g transform="translate(2,0)"><rect x="0" y="0" width="12" height="1" fill="#0c4f98"/><rect x="0" y="1" width="12" height="1" fill="#3a78bc"/><rect x="0" y="4" width="12" height="1" fill="#0c4f98"/><rect x="0" y="5" width="12" height="1" fill="#3a78bc"/><rect x="5" y="8" width="7" height="1" fill="#0c4f98"/><rect x="5" y="9" width="7" height="1" fill="#3a78bc"/></g><g transform="translate(0,7)"><path d="M0 3.500l3.500-3.500 3.500 3.500-3.500 3.500z" fill="#c8a024" stroke="#b08a14" stroke-width="0.600"/><path d="M3.500 1.200v4.600M1.200 3.500h4.600" stroke="#fffbe4" stroke-width="1.200"/></g></svg>
<svg style="left:513px;top:255px" width="16" height="16" viewBox="0 0 16 16"><rect x="0.500" y="0.500" width="12" height="7" fill="#f4faf0" stroke="#c0b080" stroke-width="0.9"/><rect x="0.500" y="8" width="12" height="7" fill="#eef4fd" stroke="#8aa0c8" stroke-width="0.9"/><rect x="2.500" y="2.500" width="2.500" height="2.500" fill="#3fae49"/><path d="M6 3.800h5" stroke="#3fae49" stroke-width="1"/><rect x="2.500" y="10" width="2.500" height="2.500" fill="#6a7ab8"/><path d="M6 11.300h5" stroke="#6a7ab8" stroke-width="1"/></svg>
<svg style="left:536px;top:255px" width="16" height="16" viewBox="0 0 16 16"><rect x="0.500" y="0.500" width="13" height="13" fill="#f4f6fb" stroke="#5a7ab8" stroke-width="1"/><path d="M1 1h4v4h-4z" fill="#dfe8f8"/><path d="M5 1v4h-4z" fill="#1f3f80"/><path d="M6 6.500h7M6 8.500h7M6 10.500h7" stroke="#8aa0c8" stroke-width="0.9"/></svg>
<svg style="left:560px;top:255px" width="16" height="16" viewBox="0 0 16 16"><path d="M0.500 0.500h8v12h-8z" fill="#fbf4e0" stroke="#b8a060" stroke-width="0.9"/><path d="M2 3.500h3M2 5.500h3M2 7.500h3M2 9.500h3" stroke="#7a9ad0"/><path d="M4.500 2.500h7l3 3v9.500h-10z" fill="#fdfdf6" stroke="#a08a50" stroke-width="0.9"/><path d="M6.500 6.500h6M6.500 8.500h6M6.500 10.500h6M6.500 12.500h6" stroke="#4a7ac8" stroke-width="1"/></svg>
<svg style="left:583px;top:255px" width="16" height="16" viewBox="0 0 16 16"><rect x="0.500" y="0.500" width="7" height="8" fill="#f4f6fb" stroke="#b0a080" stroke-width="0.9"/><path d="M2 2.500h1M4 2.500h2.500M2 4.500h1M4 4.500h2.500M2 6.500h1M4 6.500h2.500" stroke="#4a6aa8" stroke-width="1.100"/><rect x="8.500" y="5.500" width="7" height="8.500" fill="#f4f6fb" stroke="#b0a080" stroke-width="0.9"/><path d="M10 7.500h1M12 7.500h2.500M10 9.500h1M12 9.500h2.500M10 11.500h1M12 11.500h2.500" stroke="#4a6aa8" stroke-width="1.100"/><path d="M9.500 0.500q3 0.500 3 3.500m-1.500-1l1.500 1.500 1.500-1.500M6 13.500q-3-0.500-3-3.500m-1.500 1.500l1.500-1.500 1.500 1.500" fill="none" stroke="#3f5fa0" stroke-width="1"/></svg>
<svg style="left:620px;top:255px" width="16" height="16" viewBox="0 0 16 16"><defs><linearGradient id="tc" x1="0" y1="1" x2="1" y2="0"><stop offset="0" stop-color="#ffffff"/><stop offset="1" stop-color="#fbd870"/></linearGradient></defs><path d="M3.400 8.300L7.600 14.200L1 14.400L0.600 12.200Z" fill="url(#tc)" stroke="#f0b040" stroke-width="0.500"/><path d="M6.300 5.600L10.800 9.300L10.600 11.500L7.600 14.200L3.400 8.300L4.800 6Z" fill="#b4acb4" stroke="#a07838" stroke-width="0.700"/><path d="M11.500 0.800L15.500 1.800L15.500 4.200L10.800 9.300L6.300 5.600Z" fill="#fbe49a" stroke="#e8a020" stroke-width="0.900"/><path d="M12 3.600l1-1.200" stroke="#3f5fa0" stroke-width="1.100"/></svg>
<div class="a" style="left:641px;top:251px;width:149px;height:22px;background:#fff;border:1px solid #686868"></div>
<svg style="left:795px;top:255px" width="16" height="16" viewBox="0 0 16 16"><path d="M0.500 4h7v-3.500l6.500 6-6.500 6v-3.500h-7z" fill="#fdf0b0" stroke="#c8861a" stroke-width="1"/></svg>
<svg style="left:819px;top:255px" width="16" height="16" viewBox="0 0 16 16"><path d="M3 3.500h4.500v-3l6 5.500-6 5.500v-3h-4.500z" fill="#fdf0b0" stroke="#c8861a" stroke-width="1"/><path d="M2.500 5v8.500m-2-2.500l2 2.500 2-2.500" stroke="#4a5a6a" stroke-width="1" fill="none"/></svg>
<svg style="left:842px;top:254px" width="16" height="16" viewBox="0 0 16 16"><rect x="8.500" y="0.500" width="7" height="8" fill="#f4f6fb" stroke="#b0a080" stroke-width="0.9"/><path d="M11 2.500v4M11 3h2M11 6h2" stroke="#4a6aa8" stroke-width="0.9" fill="none"/><rect x="2.500" y="9.500" width="10" height="5" fill="#dfeafb" stroke="#2f6fc0" stroke-width="1"/><path d="M4 12h1.500M7 12h4" stroke="#2f6fc0"/><path d="M1 10q-1-5 4.500-5v-2l4 3.500-4 3.500v-2q-3 0-2.500 2z" fill="#5fbf5a" stroke="#2a8a30" stroke-width="0.8"/></svg>
<svg style="left:867px;top:254px" width="16" height="16" viewBox="0 0 16 16"><path d="M0.500 2.500h10v8l-3.500 4h-6.500z" fill="#fbe48a" stroke="#b8901a" stroke-width="0.9"/><path d="M7 14.500v-4h3.500" fill="#fdf4c0" stroke="#b8901a" stroke-width="0.8"/><path d="M1.500 1v2.500M3.500 1v2.500M5.500 1v2.500M7.500 1v2.500" stroke="#5a4a2a" stroke-width="0.9"/><path d="M2.500 6.500h6M2.500 8.500h6M2.500 10.500h4M2.500 12.500h2.500" stroke="#5a6a9a" stroke-width="1"/><path d="M11.500 0.500v5M9 3h5" stroke="#e0b030" stroke-width="1.500"/></svg>
<svg style="left:891px;top:255px" width="16" height="16" viewBox="0 0 16 16"><rect x="0.500" y="0.500" width="11" height="12" rx="1" fill="#b8c4dc" stroke="#7a8ab0" stroke-width="0.9"/><rect x="2.500" y="1" width="7" height="4.500" fill="#f0f4fb" stroke="#9aa8c8" stroke-width="0.6"/><rect x="3" y="8" width="6" height="4.500" fill="#dfe6f4" stroke="#7a8ab0" stroke-width="0.7"/><rect x="4" y="9" width="2" height="3" fill="#e8c060"/><path d="M7 14.500h1.500M10 14.500h1.500M13 14.500h1.500" stroke="#3f5fa0" stroke-width="1.300"/></svg>
<svg style="left:916px;top:255px" width="16" height="16" viewBox="0 0 16 16"><path d="M3.500 0.500h5v6.500h3l-5.500 6.500-5.500-6.500h3z" fill="#fbd862" stroke="#c8861a" stroke-width="1"/></svg>
<svg style="left:938px;top:254px" width="16" height="16" viewBox="0 0 16 16"><path d="M0.500 4l5-3.700v2.400h7v2.600h-7v2.400z" fill="#fdf0b0" stroke="#c8861a" stroke-width="0.9"/><path d="M15.500 11l-5-3.700v2.400h-7v2.600h7v2.400z" fill="#fdf0b0" stroke="#c8861a" stroke-width="0.9"/></svg>
<div class="a" style="left:163px;top:276px;width:911px;height:18px;background:#dedede;border-right:1px solid #8a8a8a;border-bottom:1px solid #7a7a7a"></div>
<div class="a" style="left:163px;top:276px;width:910px;height:1px;background:#f6f6f6;"></div>
<div class="a" style="left:1074px;top:276px;width:16px;height:18px;background:#dedede;"></div>
<div class="a" style="left:163px;top:294px;width:911px;height:1px;background:#9a9a9a;"></div>
<div class="a" style="left:163px;top:295px;width:911px;height:337px;background:#fff;"></div>
<div class="a" style="left:1074px;top:294px;width:16px;height:338px;background:#dedede;border-left:1px solid #7a7a7a;border-right:1px solid #7a7a7a"></div>
<div class="sbtn" style="left:1074px;top:294px;width:16px;height:17px"></div>
<svg style="left:1078px;top:300px" width="8" height="4" viewBox="0 0 8 4"><path d="M0 4h8l-4-4z" fill="#000"/></svg>
<div class="sbtn" style="left:1074px;top:616px;width:16px;height:16px"></div>
<svg style="left:1078px;top:622px" width="8" height="4" viewBox="0 0 8 4"><path d="M0 0h8l-4 4z" fill="#000"/></svg>
<div class="a" style="left:1075px;top:294px;width:14px;height:1px;background:#dedede;"></div>
<div class="a" style="left:1089px;top:276px;width:2px;height:358px;background:#6e6e6e;"></div>
<div class="a" style="left:163px;top:632px;width:928px;height:2px;background:#6a6a6a;"></div>
<div class="a" style="left:163px;top:634px;width:929px;height:1px;background:#fafafa;"></div>
<div class="a" style="left:163px;top:635px;width:929px;height:22px;background:#c0c0c0;"></div>
<div class="t" style="left:410px;top:641px;font-size:9.8px;letter-spacing:0.020px;line-height:12px;height:12px;color:#000;">Done.</div>
<div class="a" style="left:1090px;top:108px;width:4px;height:139px;background:#fcfcfc;"></div>
<div class="a" style="left:1091px;top:247px;width:3px;height:387px;background:#fcfcfc;"></div>
<div class="a" style="left:1092px;top:634px;width:2px;height:25px;background:#fcfcfc;"></div>
<div class="a" style="left:1093px;top:32px;width:1px;height:48px;background:#ececec;"></div>
<div class="a" style="left:1092px;top:80px;width:1px;height:28px;background:#8a8a8a;"></div>
<div class="a" style="left:1093px;top:80px;width:1px;height:28px;background:#6a6a6a;"></div>
<div class="a" style="left:1094px;top:31px;width:1px;height:630px;background:#5a5a5a;"></div>
<div class="a" style="left:1095px;top:8px;width:1px;height:653px;background:linear-gradient(#8f9dc0 0%,#c0a8a0 22%,#4a3428 40%,#3a2a22 100%);"></div>
<div class="a" style="left:419px;top:33px;width:13px;height:628px;background:linear-gradient(to right,rgba(0,0,0,0.10),rgba(0,0,0,0));"></div>
<div class="a" style="left:414px;top:33px;width:5px;height:628px;background:#eeeeee;"></div>
<div class="a" style="left:414px;top:33px;width:1px;height:628px;background:#9a9a9a;"></div>
<div class="a" style="left:415px;top:33px;width:1px;height:628px;background:#c8c8c8;"></div>
<div class="a" style="left:148px;top:33px;width:10px;height:628px;background:linear-gradient(to right,rgba(0,0,0,0.01),rgba(0,0,0,0.10));"></div>
<div class="a" style="left:158px;top:33px;width:256px;height:628px;background:#dedede;border:1px solid #6e6e6e;border-bottom:none"></div>
<div class="a" style="left:412px;top:34px;width:1px;height:627px;background:#e6e6e6;"></div>
<div class="a" style="left:159px;top:34px;width:254px;height:1px;background:#e6e6e6;"></div>
<div class="a" style="left:159px;top:34px;width:1px;height:627px;background:#e4e4e4;"></div>
<div class="t" style="left:185px;top:41px;font-size:12.3px;letter-spacing:0.023px;line-height:14px;height:14px;color:#000;">View Contents</div>
<div class="t" style="left:185px;top:63px;font-size:12.3px;letter-spacing:0.006px;line-height:14px;height:14px;color:#000;">View Contents (Fetch All Rows)</div>
<div class="t" style="left:185px;top:85px;font-size:12.3px;letter-spacing:-0.020px;line-height:14px;height:14px;color:#000;">View Contents (Limit Results)</div>
<svg style="left:397px;top:87px" width="5" height="8" viewBox="0 0 5 8"><path d="M0 0v8l4.500-4z" fill="#000"/></svg>
<div class="t" style="left:185px;top:107px;font-size:12.4px;letter-spacing:-0.003px;line-height:14px;height:14px;color:#000;">Edit</div>
<div class="t" style="left:185px;top:129px;font-size:12.5px;letter-spacing:0.008px;line-height:14px;height:14px;color:#000;">Describe</div>
<div class="t" style="left:185px;top:151px;font-size:12.5px;letter-spacing:-0.009px;line-height:14px;height:14px;color:#000;">Table Relationships</div>
<div class="t" style="left:185px;top:173px;font-size:12.5px;letter-spacing:0.130px;line-height:14px;height:14px;color:#000;">Search</div>
<div class="t" style="left:185px;top:195px;font-size:12px;letter-spacing:-0.110px;line-height:14px;height:14px;color:#000;">Copy</div>
<div class="t" style="left:185px;top:217px;font-size:12.5px;letter-spacing:0.017px;line-height:14px;height:14px;color:#000;">Copy to Another Database</div>
<div class="t" style="left:185px;top:239px;font-size:12.5px;letter-spacing:-0.020px;line-height:14px;height:14px;color:#000;">Copy to Local Database</div>
<svg style="left:397px;top:241px" width="5" height="8" viewBox="0 0 5 8"><path d="M0 0v8l4.500-4z" fill="#000"/></svg>
<div class="t" style="left:185px;top:261px;font-size:12.4px;letter-spacing:0.028px;line-height:14px;height:14px;color:#000;">Backup</div>
<div class="t" style="left:185px;top:283px;font-size:12.2px;letter-spacing:0.013px;line-height:14px;height:14px;color:#000;">Show Info</div>
<div class="a" style="left:160px;top:299px;width:252px;height:24px;background:#e8e6e0;"></div>
<div class="a" style="left:161px;top:300px;width:250px;height:22px;background:#5472ab;border-top:1px solid #4565a0;border-left:1px solid #4868a6"></div>
<div class="t" style="left:185px;top:305px;font-size:12.2px;letter-spacing:-0.003px;line-height:14px;height:14px;color:#fff;">Row Count</div>
<div class="sep" style="top:325px"></div>
<div class="t" style="left:185px;top:335px;font-size:12.3px;letter-spacing:0.025px;line-height:14px;height:14px;color:#000;">Generate SQL</div>
<svg style="left:397px;top:337px" width="5" height="8" viewBox="0 0 5 8"><path d="M0 0v8l4.500-4z" fill="#000"/></svg>
<div class="t" style="left:185px;top:357px;font-size:12.3px;letter-spacing:-0.013px;line-height:14px;height:14px;color:#000;">Generate DDL</div>
<div class="t" style="left:185px;top:379px;font-size:12.5px;letter-spacing:0.016px;line-height:14px;height:14px;color:#000;">Database Conversion</div>
<svg style="left:397px;top:381px" width="5" height="8" viewBox="0 0 5 8"><path d="M0 0v8l4.500-4z" fill="#000"/></svg>
<div class="sep" style="top:399px"></div>
<div class="t" style="left:185px;top:409px;font-size:12.5px;letter-spacing:0.032px;line-height:14px;height:14px;color:#000;">Create</div>
<svg style="left:397px;top:411px" width="5" height="8" viewBox="0 0 5 8"><path d="M0 0v8l4.500-4z" fill="#000"/></svg>
<div class="t" style="left:185px;top:431px;font-size:12.2px;letter-spacing:-0.008px;line-height:14px;height:14px;color:#000;">Alter</div>
<div class="t" style="left:185px;top:453px;font-size:12.4px;letter-spacing:-0.026px;line-height:14px;height:14px;color:#000;">Drop</div>
<div class="t" style="left:185px;top:475px;font-size:12.5px;letter-spacing:-0.021px;line-height:14px;height:14px;color:#000;">Drop Tables</div>
<div class="sep" style="top:495px"></div>
<div class="t" style="left:185px;top:505px;font-size:12.4px;letter-spacing:0.004px;line-height:14px;height:14px;color:#a0a0a0;">Execute</div>
<div class="sep" style="top:525px"></div>
<div class="t" style="left:185px;top:535px;font-size:12.3px;letter-spacing:-0.009px;line-height:14px;height:14px;color:#000;">Import Data</div>
<div class="t" style="left:185px;top:557px;font-size:12.4px;letter-spacing:-0.013px;line-height:14px;height:14px;color:#000;">Export Data</div>
<div class="t" style="left:185px;top:579px;font-size:12.4px;letter-spacing:-0.009px;line-height:14px;height:14px;color:#000;">Export Tables</div>
<div class="sep" style="top:599px"></div>
<div class="t" style="left:185px;top:609px;font-size:12px;letter-spacing:0.021px;line-height:14px;height:14px;color:#000;">Query Builder</div>
<div class="t" style="left:185px;top:631px;font-size:12.3px;letter-spacing:0.004px;line-height:14px;height:14px;color:#000;">Compare Tool</div>
<div class="sep" style="top:651px"></div>
</body></html>
